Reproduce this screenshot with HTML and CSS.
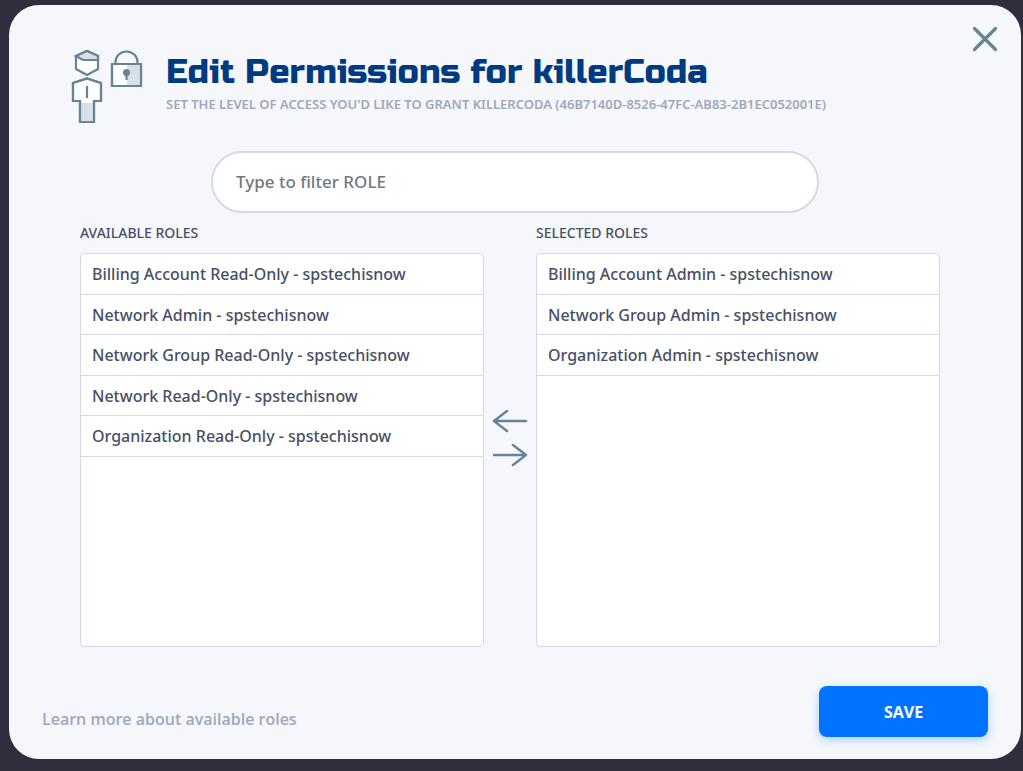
FILE: index.html
```html
<!DOCTYPE html>
<html lang="en">
<head>
<meta charset="utf-8">
<title>Edit Permissions</title>
<link rel="stylesheet" href="styles.css">
</head>
<body>
<main class="dialog" role="dialog" aria-labelledby="dialog-title">
  <button class="close" type="button" aria-label="Close">
    <svg width="26" height="26" viewBox="0 0 26 26"><path stroke-width="3.2" d="M2.5 2.5 23.5 23.5M23.5 2.5 2.5 23.5"/></svg>
  </button>
  <header class="header">
    <svg class="emblem" width="72" height="74" viewBox="0 0 72 74" stroke-width="2.2" aria-hidden="true">
      <path class="paper" d="M5 7 16 2 27 7V20L16 26 5 20Z"/>
      <path class="shade" d="M5 7 16 2 27 7V11H12Z"/>
      <path class="paper" d="M2 34 16 29.500 30 34V52H23V73H9V52H2Z"/>
      <path class="fill" d="M9 54H23V73H9Z"/>
      <path class="line" d="M2 34 16 29.500 30 34V52H23V73H9V52H2ZM16 37V49"/>
      <path class="line" d="M44.500 14V13A11 10.500 0 0 1 66.500 13V14"/>
      <path class="paper" d="M41 15H70V37H41Z"/>
      <path class="fill" d="M56 16H69V36H56Z"/>
      <path class="line" d="M41 15H70V37H41ZM55.500 24V31"/>
      <circle class="keyhole" cx="55.500" cy="23.500" r="3.500"/>
    </svg>
    <div class="heading">
      <h1 class="title" id="dialog-title">Edit Permissions for killerCoda</h1>
      <p class="subtitle">SET THE LEVEL OF ACCESS YOU'D LIKE TO GRANT KILLERCODA (46B7140D-8526-47FC-AB83-2B1EC052001E)</p>
    </div>
  </header>
  <input class="filter" type="text" placeholder="Type to filter ROLE" aria-label="Type to filter ROLE">
  <div class="picker">
    <section class="column">
      <h2 class="label" id="available">AVAILABLE ROLES</h2>
      <ul class="roles" aria-labelledby="available">
        <li class="role">Billing Account Read-Only - spstechisnow</li>
        <li class="role">Network Admin - spstechisnow</li>
        <li class="role">Network Group Read-Only - spstechisnow</li>
        <li class="role">Network Read-Only - spstechisnow</li>
        <li class="role">Organization Read-Only - spstechisnow</li>
      </ul>
    </section>
    <div class="moves">
      <button class="move" type="button" aria-label="Remove role">
        <svg width="36" height="24" viewBox="0 0 36 24"><path stroke-width="2.4" d="M34 12H2M15 2 2 12 15 22"/></svg>
      </button>
      <button class="move" type="button" aria-label="Add role">
        <svg width="36" height="24" viewBox="0 0 36 24"><path stroke-width="2.4" d="M2 12H34M21 2 34 12 21 22"/></svg>
      </button>
    </div>
    <section class="column">
      <h2 class="label" id="selected">SELECTED ROLES</h2>
      <ul class="roles" aria-labelledby="selected">
        <li class="role">Billing Account Admin - spstechisnow</li>
        <li class="role">Network Group Admin - spstechisnow</li>
        <li class="role">Organization Admin - spstechisnow</li>
      </ul>
    </section>
  </div>
  <footer class="footer">
    <a class="more" href="#">Learn more about available roles</a>
    <button class="save" type="button">SAVE</button>
  </footer>
</main>
</body>
</html>
```

FILE: styles.css
```css
* { box-sizing: border-box; }

body {
  margin: 0;
  min-height: 100vh;
  padding: 5px 2px 12px 9px;
  display: flex;
  background: #302e3d;
  color: #474f66;
  font: 500 16px/24px "Noto Sans", "Open Sans", sans-serif;
}

.dialog {
  position: relative;
  flex: 1;
  min-width: 0;
  display: flex;
  flex-direction: column;
  padding: 44px 33px 22px;
  border-radius: 30px;
  background: #f5f7fb;
}

button {
  padding: 0;
  border: 0;
  background: none;
  font: inherit;
  cursor: pointer;
}

.close {
  position: absolute;
  top: 21px;
  right: 23px;
}

.close svg, .move svg, .emblem { display: block; }

.close path, .move path {
  fill: none;
  stroke: #658596;
  stroke-linecap: round;
  stroke-linejoin: round;
}

.header {
  display: flex;
  gap: 23px;
  padding: 0 29px;
}

.emblem { flex: none; }

.emblem path { stroke: #658596; }

.emblem .paper { fill: #fff; }
.emblem .shade { fill: #d9dfe4; }
.emblem .fill { fill: #d9dfe4; stroke: none; }
.emblem .line { fill: none; }
.keyhole { fill: #658596; }

.heading { padding-top: 3px; }

.title {
  margin: 0;
  color: #003a80;
  font: 400 34px/40px "Russo One", Inter, sans-serif;
}

.subtitle {
  margin: 3px 0 0;
  color: #a0a7bc;
  font-size: 13px;
  font-weight: 600;
  line-height: 18px;
}

.filter {
  align-self: center;
  width: 608px;
  max-width: 100%;
  height: 62px;
  margin-top: 28px;
  padding: 0 23px 2px;
  border: 2px solid #d4d9e4;
  border-radius: 31px;
  background: #fff;
  color: #474f66;
  font: inherit;
  font-size: 17px;
}

.filter::placeholder { color: #717982; opacity: 1; }

.picker {
  flex: 1;
  display: grid;
  grid-template-columns: 1fr 52px 1fr;
  padding: 8px 48px 0 38px;
}

.column {
  display: flex;
  flex-direction: column;
}

.label {
  margin: 0 0 8px;
  font-size: 14px;
  font-weight: 500;
}

.roles {
  flex: 1;
  margin: 0;
  padding: 0;
  border: 1px solid #d4d9e4;
  border-radius: 4px;
  background: #fff;
  list-style: none;
}

.role {
  height: 40px;
  padding: 8px 11px 7px;
  border-bottom: 1px solid #d4d9e4;
}

.role:nth-child(odd) { height: 41px; }

.moves {
  display: flex;
  flex-direction: column;
  align-items: center;
  justify-content: center;
  gap: 10px;
  padding-top: 8px;
}

.footer {
  display: flex;
  align-items: center;
  justify-content: space-between;
  margin-top: 39px;
}

.more {
  padding-top: 15px;
  color: #a0a7bc;
  font-family: "Open Sans", sans-serif;
  font-weight: 600;
  text-decoration: none;
}

.save {
  width: 169px;
  height: 51px;
  border-radius: 8px;
  background: #0073ff;
  box-shadow: 0 3px 10px rgba(0, 115, 255, 0.3);
  color: #fff;
  font-family: "Open Sans", sans-serif;
  font-weight: 700;
}
```
